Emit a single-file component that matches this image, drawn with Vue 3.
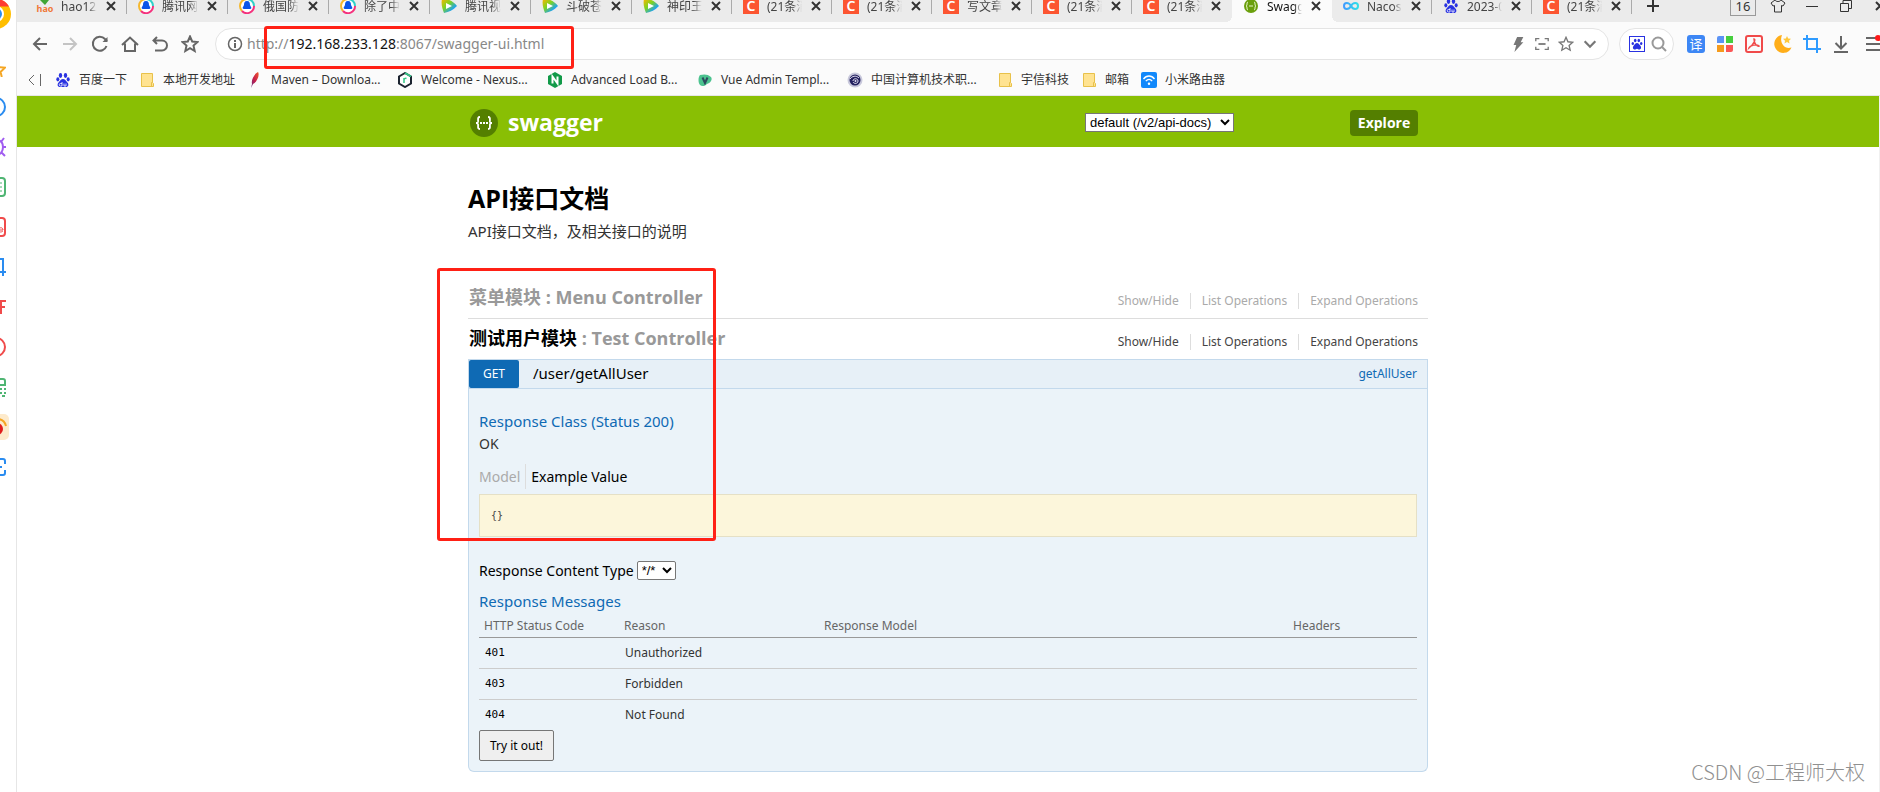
<script setup>
import { ref } from 'vue'

const tabs = [
  { icon: 'hao', title: 'hao123' },
  { icon: 'qq', title: '腾讯网' },
  { icon: 'qq', title: '俄国防部' },
  { icon: 'qq', title: '除了中国' },
  { icon: 'video', title: '腾讯视频' },
  { icon: 'video', title: '斗破苍穹' },
  { icon: 'video', title: '神印王座' },
  { icon: 'csdn', title: '(21条消息)' },
  { icon: 'csdn', title: '(21条消息)' },
  { icon: 'csdn', title: '写文章-CSDN' },
  { icon: 'csdn', title: '(21条消息)' },
  { icon: 'csdn', title: '(21条消息)' },
  { icon: 'swagger', title: 'Swagger UI', active: true },
  { icon: 'nacos', title: 'Nacos' },
  { icon: 'paw', title: '2023-07' },
  { icon: 'csdn', title: '(21条消息)' },
]

const navButtons = [
  { icon: 'back', label: '后退' },
  { icon: 'forward', label: '前进' },
  { icon: 'reload', label: '刷新' },
  { icon: 'home', label: '主页' },
  { icon: 'undo', label: '恢复' },
  { icon: 'star', label: '收藏' },
]

const addressButtons = [
  { icon: 'bolt', label: '极速模式' },
  { icon: 'scan', label: '截取' },
  { icon: 'star', label: '收藏本页' },
  { icon: 'chevron', label: '展开' },
]

const extensions = [
  { icon: 'grid', label: '应用' },
  { icon: 'pdf', label: 'PDF' },
  { icon: 'moon', label: '夜间模式' },
  { icon: 'crop', label: '截图' },
  { icon: 'download', label: '下载' },
]

const bookmarks = [
  { icon: 'paw', title: '百度一下' },
  { icon: 'folder', title: '本地开发地址' },
  { icon: 'feather', title: 'Maven – Downloa...', long: true },
  { icon: 'nexus', title: 'Welcome - Nexus...', long: true },
  { icon: 'nginx', title: 'Advanced Load B...', long: true },
  { icon: 'vue', title: 'Vue Admin Templ...', long: true },
  { icon: 'seal', title: '中国计算机技术职...', long: true },
  { icon: 'folder', title: '宇信科技' },
  { icon: 'folder', title: '邮箱' },
  { icon: 'wifi', title: '小米路由器' },
]

const rail = [
  { icon: 'r-star', label: '收藏夹' },
  { icon: 'r-blue', label: '历史' },
  { icon: 'r-bug', label: '工具' },
  { icon: 'r-note', label: '笔记' },
  { icon: 'r-card', label: '文档' },
  { icon: 'r-crop', label: '截图' },
  { icon: 'r-font', label: '字体' },
  { icon: 'r-red', label: '录制' },
  { icon: 'r-qr', label: '二维码' },
  { icon: 'r-weibo', label: '微博' },
  { icon: 'r-scan', label: '扫描' },
]

const resources = [
  { name: '菜单模块', controller: 'Menu Controller', active: false },
  { name: '测试用户模块', controller: 'Test Controller', active: true },
]
const operations = ['Show/Hide', 'List Operations', 'Expand Operations']

const messages = [
  { code: '401', reason: 'Unauthorized' },
  { code: '403', reason: 'Forbidden' },
  { code: '404', reason: 'Not Found' },
]

const spec = ref('default')
const contentType = ref('*/*')
</script>

<template>
  <div class="browser">
    <svg class="sprite" aria-hidden="true">
      <defs>
        <linearGradient id="g-video" x1="0" y1="0" x2="1" y2="1">
          <stop offset="0" stop-color="#ffb400" /><stop offset=".4" stop-color="#7ed321" /><stop offset=".75" stop-color="#18a0fb" />
        </linearGradient>
        <linearGradient id="g-nacos" x1="0" x2="1"><stop offset="0" stop-color="#3f9bff" /><stop offset="1" stop-color="#2fe0e8" /></linearGradient>
        <linearGradient id="g-feather" x1="1" y1="0" x2="0" y2="1"><stop offset="0" stop-color="#f0582c" /><stop offset=".5" stop-color="#c8204a" /><stop offset="1" stop-color="#5b2c82" /></linearGradient>
      </defs>

      <symbol id="qq" viewBox="0 0 16 16">
        <circle cx="8" cy="8" r="7" fill="#fff" />
        <path d="M8 1a7 7 0 0 0-7 7c0 2 .8 3.800 2 5" fill="none" stroke="#f5b82e" stroke-width="2" />
        <path d="M8 1a7 7 0 0 1 7 7" fill="none" stroke="#2ed1c8" stroke-width="2" />
        <path d="M15 8a7 7 0 0 1-12 5" fill="none" stroke="#f5307c" stroke-width="2" />
        <path d="M8 3c2.500 0 3 2 3 4l1.500 3-1 1h-7l-1-1L5 7c0-2 .5-4 3-4z" fill="#0b55e8" />
      </symbol>
      <symbol id="video" viewBox="0 0 16 16">
        <path d="M1 1c5-1 11 2 15 7-4 4-8 6-13 7C1 10 0 6 1 1z" fill="url(#g-video)" />
        <path d="M5 5l6 3-6 3z" fill="#fff" />
      </symbol>
      <symbol id="swagger" viewBox="0 0 16 16">
        <circle cx="8" cy="8" r="7" fill="#6a9f0c" />
        <path d="M5 4c-2 0 0 4-2 4 2 0 0 4 2 4M11 4c2 0 0 4 2 4-2 0 0 4-2 4M6 8h4" fill="none" stroke="#e7f5c8" stroke-width="1" />
      </symbol>
      <symbol id="nacos" viewBox="0 0 16 16">
        <path d="M8 8C6 4 1 4 1 8s5 4 7 0 7-4 7 0-5 4-7 0z" fill="none" stroke="url(#g-nacos)" stroke-width="2" />
      </symbol>
      <symbol id="paw" viewBox="0 0 16 16">
        <g fill="#2932e1">
          <ellipse cx="5.500" cy="3.500" rx="1.700" ry="2.400" /><ellipse cx="10.500" cy="3.500" rx="1.700" ry="2.400" />
          <ellipse cx="2.800" cy="7.300" rx="1.500" ry="2.100" /><ellipse cx="13.200" cy="7.300" rx="1.500" ry="2.100" />
          <path d="M8 7c2 0 2.700 1.800 4.200 3.200 2 2 1.300 4.800-1.200 4.800H5c-2.500 0-3.200-2.800-1.200-4.800C5.300 8.800 6 7 8 7z" />
        </g>
        <path d="M7 10v4H5.500a1 1 0 0 1 0-2.500H7M9 11.500v2.500h2v-2.500" fill="none" stroke="#fff" stroke-width=".8" />
      </symbol>

      <symbol id="back" viewBox="0 0 18 18"><path d="M16 9H3M9 3L3 9l6 6" /></symbol>
      <symbol id="forward" viewBox="0 0 18 18"><path d="M2 9h13M9 3l6 6-6 6" /></symbol>
      <symbol id="reload" viewBox="0 0 18 18"><path d="M15.500 11a7 7 0 1 1-1.500-7l2 2" /><path d="M16.500 2v5h-5z" fill="currentColor" stroke="none" /></symbol>
      <symbol id="home" viewBox="0 0 18 18"><path d="M1 10l8-7.500L17 10M4 8.500V16h10V8.500" /></symbol>
      <symbol id="undo" viewBox="0 0 18 18"><path d="M6 2L2.500 5.500 6 9M3 5.500h8a5 5 0 0 1 0 10H4" /></symbol>
      <symbol id="star" viewBox="0 0 18 18"><path d="M9 1.500l2.200 5 5.300.5-4 3.600 1.200 5.400L9 13.200 4.300 16l1.200-5.400-4-3.600 5.300-.5z" /></symbol>
      <symbol id="info" viewBox="0 0 16 16"><circle cx="8" cy="8" r="6.500" stroke-width="1.500" /><path d="M8 7v5M8 4v2" stroke-width="2" /></symbol>
      <symbol id="bolt" viewBox="0 0 18 18"><path d="M8 1h7l-3 6h3L5 18l2-8H4z" fill="currentColor" stroke="none" /></symbol>
      <symbol id="scan" viewBox="0 0 18 18"><path d="M2 6V3h4M12 3h4v3M16 12v3h-4M6 15H2v-3" stroke-width="1.500" /><path d="M5 9h8" stroke-width="2" /></symbol>
      <symbol id="chevron" viewBox="0 0 18 18"><path d="M3 6l6 6 6-6" stroke-width="2.500" /></symbol>
      <symbol id="search" viewBox="0 0 18 18"><circle cx="8" cy="8" r="5.500" /><path d="M12 12l4 4" /></symbol>
      <symbol id="pawbox" viewBox="0 0 16 16">
        <rect x=".5" y=".5" width="15" height="15" fill="#fff" stroke="#2932e1" stroke-width="1" />
        <g fill="#2932e1" stroke="none">
          <ellipse cx="6.200" cy="4.500" rx="1.300" ry="1.700" /><ellipse cx="9.800" cy="4.500" rx="1.300" ry="1.700" />
          <ellipse cx="3.800" cy="7.500" rx="1.200" ry="1.500" /><ellipse cx="12.200" cy="7.500" rx="1.200" ry="1.500" />
          <path d="M8 7c1.500 0 2 1.200 3.200 2.500 1.500 1.600 1 4-1 4-1 0-1.200-.8-2.200-.8s-1.200.8-2.200.8c-2 0-2.500-2.400-1-4C6 8.200 6.500 7 8 7z" />
        </g>
      </symbol>
      <symbol id="grid" viewBox="0 0 18 18">
        <g stroke="none">
          <path d="M1 3a2 2 0 0 1 2-2h5v7H1z" fill="#5b93f5" /><path d="M10 1h7v7h-7z" fill="#46cf3e" />
          <path d="M1 10h7v7H1z" fill="#f59b1c" /><path d="M10 10h7v5a2 2 0 0 1-2 2h-5z" fill="#fb5656" />
        </g>
      </symbol>
      <symbol id="pdf" viewBox="0 0 18 18">
        <rect x="1" y="1" width="16" height="16" rx="2" stroke="#f04a4a" />
        <path d="M9 4c2 0 0 5-5 9 1-3 8-4 10-2-2 1-5-3-5-7z" stroke="#f04a4a" stroke-width="1.500" />
      </symbol>
      <symbol id="moon" viewBox="0 0 18 18">
        <path d="M8 0a9 9 0 1 0 9.500 12.500C10 15 5 7 8 0z" fill="#ffae1a" stroke="none" />
        <path d="M13 1l1.200 2.600 2.800.2-2 2 .5 2.700-2.500-1.400-2.500 1.400.5-2.700-2-2 2.800-.2z" fill="#ffc83d" stroke="none" />
      </symbol>
      <symbol id="crop" viewBox="0 0 18 18"><path d="M4 0v14h14M0 4h14v14" stroke="#2f9bff" /></symbol>
      <symbol id="download" viewBox="0 0 18 18"><path d="M9 1v12M3.500 8L9 13.500 14.500 8M2 17h14" /></symbol>
      <symbol id="menu" viewBox="0 0 18 18"><path d="M0 3h18M0 9h18M0 15h18" /><circle cx="12" cy="3" r="3" fill="#ff1a1a" stroke="none" /></symbol>

      <symbol id="folder" viewBox="0 0 16 16"><path d="M2.500 1.500h11v9l1 1v3h-12z" fill="#ffe391" stroke="#e8c14a" /><path d="M13.500 10.500h-1v4" fill="none" stroke="#e8c14a" /></symbol>
      <symbol id="feather" viewBox="0 0 16 16"><path d="M11 0c2 3-1 10-5 12l-2 4 1-4C4 8 7 2 11 0z" fill="url(#g-feather)" /></symbol>
      <symbol id="nexus" viewBox="0 0 16 16">
        <path d="M8 1L2 4.500v7L8 15l6-3.500v-7z" fill="#fff" stroke="#1c2430" stroke-width="2" /><path d="M8 1l6 3.500" stroke="#35c788" stroke-width="2" />
        <path d="M7 11V6M7 8c0-1 1-2 2.500-1.500" fill="none" stroke="#35c788" stroke-width="1.500" />
      </symbol>
      <symbol id="nginx" viewBox="0 0 16 16">
        <path d="M8 0l7 4v8l-7 4-7-4V4z" fill="#119a49" /><path d="M5.500 11.500v-7l5 7v-7" fill="none" stroke="#fff" stroke-width="2" />
      </symbol>
      <symbol id="vue" viewBox="0 0 16 16">
        <path d="M3 3c4-1 8-1 11 2 2 3-1 6-4 7-2 2-5 3-7 1C1 11 1 5 3 3z" fill="#4cc38f" /><path d="M5.500 5.500L8 11l2.500-5.500" fill="none" stroke="#2d4a5e" stroke-width="2" />
      </symbol>
      <symbol id="seal" viewBox="0 0 16 16">
        <circle cx="8" cy="8" r="7.500" fill="#c9c9dc" /><circle cx="8" cy="8" r="5.500" fill="#23205e" />
        <path d="M3 7c2-3 6-4 9-1M6 9c0-3 5-3 5 0s-4 3-5 1" fill="none" stroke="#e5e3f5" stroke-width="1" /><circle cx="8.500" cy="9" r="1" fill="#e5e3f5" />
      </symbol>
      <symbol id="wifi" viewBox="0 0 16 16">
        <rect width="16" height="16" rx="2" fill="#1289fb" /><path d="M2.500 7c3-4 8-4 11 0M4.800 9.200c2-2.400 4.500-2.400 6.400 0" fill="none" stroke="#fff" stroke-width="1.300" /><circle cx="8" cy="11.800" r="1.200" fill="#fff" />
      </symbol>

      <symbol id="close" viewBox="0 0 12 12"><path d="M2 2l8 8M10 2l-8 8" /></symbol>
      <symbol id="plus" viewBox="0 0 12 12"><path d="M6 0v12M0 6h12" stroke-width="2" /></symbol>
      <symbol id="shirt" viewBox="0 0 16 14"><path d="M5 1c1 2 5 2 6 0l4 3-2 3-1.500-.5V13h-7V6.500L3 7 1 4z" stroke-width="1" /></symbol>
      <symbol id="minimize" viewBox="0 0 12 12"><path d="M0 6.500h12" stroke-width="1" /></symbol>
      <symbol id="restore" viewBox="0 0 12 12"><path d="M.5 3.500h8v8h-8zM3 3.500v-3h8.500v8H8.500" stroke-width="1" /></symbol>

      <symbol id="r-star" viewBox="0 0 20 20"><path d="M10 5l2.500 5 6.500.6-4.500 4.400 1.300 5M10 17l-5.800 3 1.300-6L1 10.600 7.500 10z" stroke="#f5a623" /></symbol>
      <symbol id="r-blue" viewBox="0 0 20 20"><circle cx="10" cy="10" r="9" stroke="#2a8cf0" /></symbol>
      <symbol id="r-bug" viewBox="0 0 20 20"><path d="M10 3c5 0 7 3 7 7s-2 8-7 8M15 5l3-4M17 10h3M15 15l4 4" stroke="#a05cf0" /></symbol>
      <symbol id="r-note" viewBox="0 0 20 20"><rect x="2" y="1" width="17" height="18" rx="3" stroke="#4fb573" /><path d="M9 6h7M9 10h7M9 14h7" stroke="#4fb573" stroke-width="1" /></symbol>
      <symbol id="r-card" viewBox="0 0 20 20"><rect x="2" y="1" width="17" height="18" rx="3" stroke="#f04b4b" /><path d="M12 13h5c0-3-4-3-4 0s3 2 4 1" stroke="#f04b4b" stroke-width="1" /></symbol>
      <symbol id="r-crop" viewBox="0 0 20 20"><path d="M17 1v18M13 2h4M10 15h10" stroke="#2a8cf0" /></symbol>
      <symbol id="r-font" viewBox="0 0 20 20"><path d="M2 4h18M15 4v13M15 10h4" stroke="#f04b4b" /></symbol>
      <symbol id="r-red" viewBox="0 0 20 20"><circle cx="10" cy="10" r="9" stroke="#f04b4b" /></symbol>
      <symbol id="r-qr" viewBox="0 0 20 20"><path d="M13 2h4q2 0 2 2v4h-6M14 12h2M18 12h2M14 16h2M18 16h2M16 19h3" stroke="#4fb573" /></symbol>
      <symbol id="r-weibo" viewBox="0 0 26 26"><rect width="26" height="26" rx="5" fill="#fdeacb" stroke="none" /><circle cx="14" cy="15" r="6" fill="#e11d1d" stroke="none" /><path d="M14 5c5 0 8 3 9 7" stroke="#f5a623" /></symbol>
      <symbol id="r-scan" viewBox="0 0 20 20"><path d="M13 2h4q2 0 2 2v3M13 18h4q2 0 2-2v-3M12 10h4" stroke="#2a8cf0" /></symbol>
    </svg>

    <nav class="rail" aria-label="侧边栏">
      <button class="rail-logo" type="button" aria-label="浏览器">
        <svg viewBox="0 0 30 30">
          <circle cx="15" cy="15" r="15" fill="#ffbe00" />
          <path d="M15 15L2 7.500A15 15 0 0 1 28 7.500H15z" fill="#ff3b30" />
          <circle cx="15" cy="15" r="8" fill="#fff" /><circle cx="15" cy="15" r="6" fill="#2a8cf0" />
        </svg>
      </button>
      <button v-for="item in rail" :key="item.icon" :class="['rail-item', item.icon]" type="button" :aria-label="item.label">
        <svg class="line"><use :href="'#' + item.icon" /></svg>
      </button>
    </nav>

    <div class="window">
      <header class="chrome">
        <div class="tab-strip">
          <div class="tabs">
            <div v-for="(tab, i) in tabs" :key="i" :class="['tab', { active: tab.active, 'before-active': tabs[i + 1]?.active }]">
              <span v-if="tab.icon === 'csdn'" class="favicon csdn">C</span>
              <span v-else-if="tab.icon === 'hao'" class="favicon hao">
                <svg viewBox="0 0 16 7"><path d="M2 1l3-1 2 2 5-5h4L8 7z" fill="#3fa535" /></svg>
                <span>hao</span>
              </span>
              <svg v-else class="favicon"><use :href="'#' + tab.icon" /></svg>
              <span class="tab-title">{{ tab.title }}</span>
              <button class="tab-close" type="button" aria-label="关闭标签页"><svg class="line"><use href="#close" /></svg></button>
            </div>
          </div>
          <div class="window-controls">
            <button class="new-tab" type="button" aria-label="新标签页"><svg class="line"><use href="#plus" /></svg></button>
            <button class="tab-count" type="button">16</button>
            <button class="skin" type="button" aria-label="皮肤"><svg class="line"><use href="#shirt" /></svg></button>
            <button class="win" type="button" aria-label="最小化"><svg class="line"><use href="#minimize" /></svg></button>
            <button class="win" type="button" aria-label="还原"><svg class="line"><use href="#restore" /></svg></button>
            <button class="win" type="button" aria-label="关闭"><svg class="line"><use href="#close" /></svg></button>
          </div>
        </div>

        <div class="toolbar">
          <div class="nav-buttons">
            <button v-for="b in navButtons" :key="b.icon" :class="['tool', b.icon]" type="button" :aria-label="b.label">
              <svg class="line"><use :href="'#' + b.icon" /></svg>
            </button>
          </div>
          <div class="address">
            <svg class="info line"><use href="#info" /></svg>
            <span class="url">http://<b>192.168.233.128</b>:8067/swagger-ui.html</span>
            <div class="address-actions">
              <button v-for="b in addressButtons" :key="b.icon" class="tool small" type="button" :aria-label="b.label">
                <svg class="line"><use :href="'#' + b.icon" /></svg>
              </button>
            </div>
            <div class="mark mark-url"></div>
          </div>
          <div class="search">
            <svg class="engine"><use href="#pawbox" /></svg>
            <button class="tool" type="button" aria-label="搜索"><svg class="line"><use href="#search" /></svg></button>
          </div>
          <div class="extensions">
            <button class="tool translate" type="button" aria-label="翻译">译</button>
            <button v-for="b in extensions" :key="b.icon" class="tool" type="button" :aria-label="b.label">
              <svg class="line"><use :href="'#' + b.icon" /></svg>
            </button>
          </div>
          <button class="tool menu" type="button" aria-label="菜单"><svg class="line"><use href="#menu" /></svg></button>
        </div>

        <div class="bookmarks">
          <button class="collapse" type="button" aria-label="收起书签栏">
            <svg viewBox="0 0 14 14"><path d="M6 2L1 7l5 5M12.500 1v12" /></svg>
          </button>
          <a v-for="(b, i) in bookmarks" :key="i" class="bookmark" href="#">
            <svg class="favicon"><use :href="'#' + b.icon" /></svg>
            <span :class="{ long: b.long }">{{ b.title }}</span>
          </a>
        </div>
      </header>

      <div class="page">
        <div class="swagger-bar">
          <div class="container bar-inner">
            <a class="brand" href="#">
              <svg viewBox="0 0 28 28">
                <circle cx="14" cy="14" r="14" fill="#547f00" />
                <path d="M10 8C7 8 8.500 11 8 13q-.3 1-2 1 1.700 0 2 1c.5 2-1 5 2 5M18 8c3 0 1.500 3 2 5q.3 1 2 1-1.700 0-2 1c-.5 2 1 5-2 5" fill="none" stroke="#fff" stroke-width="1.800" />
                <path d="M10 13h2v2h-2zM13 13h2v2h-2zM16 13h2v2h-2z" fill="#fff" />
              </svg>
              <span>swagger</span>
            </a>
            <form class="spec-form" @submit.prevent>
              <select v-model="spec" aria-label="API"><option value="default">default (/v2/api-docs)</option></select>
              <button class="explore" type="submit">Explore</button>
            </form>
          </div>
        </div>

        <main class="container main">
          <h1>API接口文档</h1>
          <p class="desc">API接口文档，及相关接口的说明</p>

          <div class="resources">
            <div class="mark mark-api"></div>
            <section v-for="r in resources" :key="r.name" :class="['resource', { active: r.active }]">
              <div class="resource-head">
                <h2><a href="#">{{ r.name }}</a> : {{ r.controller }}</h2>
                <ul class="ops">
                  <li v-for="op in operations" :key="op"><a href="#">{{ op }}</a></li>
                </ul>
              </div>
            </section>

            <article class="operation">
              <h3 class="op-head">
                <a class="method" href="#">GET</a>
                <a class="path" href="#">/user/getAllUser</a>
                <a class="nickname" href="#">getAllUser</a>
              </h3>
              <div class="op-body">
                <h4>Response Class (Status 200)</h4>
                <p class="status">OK</p>
                <div class="signature">
                  <a href="#">Model</a>
                  <a class="selected" href="#">Example Value</a>
                </div>
                <pre class="snippet"><code>{}</code></pre>
                <div class="content-type">
                  <label for="content-type">Response Content Type</label>
                  <select id="content-type" v-model="contentType"><option>*/*</option></select>
                </div>
                <h4>Response Messages</h4>
                <table>
                  <thead>
                    <tr><th class="c-code">HTTP Status Code</th><th class="c-reason">Reason</th><th>Response Model</th><th class="c-headers">Headers</th></tr>
                  </thead>
                  <tbody>
                    <tr v-for="m in messages" :key="m.code"><td class="code">{{ m.code }}</td><td>{{ m.reason }}</td><td></td><td></td></tr>
                  </tbody>
                </table>
                <button class="try" type="button">Try it out!</button>
              </div>
            </article>
          </div>
        </main>
        <div class="watermark">CSDN @工程师大权</div>
      </div>
    </div>
  </div>
</template>

<style>
body { background: #fff; overflow: hidden; }
</style>

<style scoped>
* { box-sizing: border-box; }
.browser {
  display: flex;
  min-height: 100vh;
  overflow: hidden;
  font-family: "Noto Sans", "Noto Sans CJK SC", sans-serif;
  color: #333;
}
.sprite { position: absolute; width: 0; height: 0; }
svg { display: block; flex: none; }
button { margin: 0; padding: 0; border: 0; background: none; color: inherit; font: inherit; }
a { color: inherit; text-decoration: none; }
h1, h2, h3, h4, p, ul, pre { margin: 0; padding: 0; }
ul { list-style: none; }
.line { width: 100%; height: 100%; fill: none; stroke: currentColor; stroke-width: 2; }

.rail {
  flex: none;
  display: flex;
  flex-direction: column;
  align-items: flex-end;
  gap: 20px;
  width: 17px;
  padding-right: 10px;
  border-right: 1px solid #e6e6e6;
  overflow: hidden;
}
.rail-logo { width: 30px; height: 30px; margin: -1px -5px 8px 0; }
.rail-item { flex: none; width: 20px; height: 20px; }
.r-weibo { width: 26px; height: 26px; margin: -3px -3px -3px 0; }

.window { flex: 1; min-width: 0; display: flex; flex-direction: column; }
.chrome { background: #fbfbfb; border-bottom: 1px solid #e6e6e6; }

.tab-strip { display: flex; height: 22px; background: #ebebeb; overflow: hidden; }
.tabs { flex: 1; min-width: 0; display: flex; padding-left: 9px; }
.tab {
  flex: 0 1 100px;
  min-width: 0;
  display: flex;
  align-items: center;
  gap: 8px;
  height: 32px;
  margin-top: -10px;
  padding: 0 10px 0 11px;
  position: relative;
  font-size: 12px;
  color: #444;
}
.tab:nth-child(-n+6) { flex-basis: 101px; }
.tab::after { content: ""; position: absolute; right: 0; top: 8px; bottom: 8px; width: 1px; background: #aaa; }
.tab.active { background: #fbfbfb; color: #111; }
.tab.active::after, .tab.before-active::after { display: none; }
.tab.before-active { background: radial-gradient(circle at 0 0, transparent 6px, #fbfbfb 6px) right bottom / 6px 6px no-repeat; }
.tab.active + .tab { background: radial-gradient(circle at 100% 0, transparent 6px, #fbfbfb 6px) left bottom / 6px 6px no-repeat; }
.favicon { flex: none; width: 16px; height: 16px; }
.csdn { background: #fc5531; color: #fff; font-size: 14px; font-weight: 600; line-height: 16px; text-align: center; }
.hao { display: flex; flex-direction: column; align-items: center; color: #f07838; font-size: 9px; font-weight: 700; line-height: 8px; }
.hao svg { width: 16px; height: 7px; }
.tab-title {
  flex: 1;
  min-width: 0;
  overflow: hidden;
  white-space: nowrap;
  mask-image: linear-gradient(90deg, #000 75%, transparent);
}
.tab-close { flex: none; width: 12px; height: 12px; color: #333; }
.window-controls { flex: none; display: flex; align-items: center; width: 248px; height: 32px; margin-top: -10px; color: #333; }
.new-tab { flex: none; width: 12px; height: 12px; margin: 0 71px 0 15px; }
.tab-count { flex: none; width: 26px; height: 20px; margin-right: 14px; border: 1px solid #999; font-size: 13px; line-height: 18px; }
.skin { flex: none; width: 16px; height: 14px; margin-right: 20px; }
.win { flex: none; width: 12px; height: 12px; margin-right: 22px; }

.toolbar { display: flex; align-items: center; height: 44px; padding-left: 14px; color: #666; }
.tool { flex: none; display: block; width: 18px; height: 18px; }
.tool.small { width: 16px; height: 16px; }
.small .line { stroke-width: 1.5; }
.nav-buttons { display: flex; gap: 12px; margin-right: 16px; }
.forward { color: #c4c4c4; }
.address {
  flex: 1;
  min-width: 0;
  position: relative;
  display: flex;
  align-items: center;
  height: 32px;
  padding: 0 10px 0 11px;
  border: 1px solid #e4e4e4;
  border-radius: 16px;
  background: #fff;
}
.info { width: 16px; height: 16px; margin-right: 4px; }
.url { flex: 1; white-space: nowrap; overflow: hidden; font-size: 14px; line-height: 20px; color: #888; }
.url b { font-weight: 400; color: #111; }
.address-actions { display: flex; gap: 8px; color: #777; }
.search { flex: none; display: flex; align-items: center; gap: 5px; height: 32px; margin: 0 13px 0 10px; padding: 0 5px 0 9px; border: 1px solid #e4e4e4; border-radius: 16px; background: #fff; color: #999; }
.engine { width: 16px; height: 16px; }
.extensions { flex: none; display: flex; gap: 11px; }
.translate { border-radius: 3px; background: #3d87f5; color: #fff; font-size: 13px; line-height: 18px; text-align: center; }
.menu { width: 14px; margin-left: 16px; overflow: hidden; }
.menu .line { width: 18px; }

.mark { position: absolute; border: 3px solid #ff2015; border-radius: 3px; pointer-events: none; z-index: 2; }
.mark-url { left: 48px; top: -3px; width: 310px; height: 43px; }
.mark-api { left: -31px; top: -10px; width: 279px; height: 273px; }

.bookmarks { display: flex; align-items: center; gap: 12px; height: 29px; padding: 0 0 2px 11px; font-size: 12px; line-height: 18px; overflow: hidden; }
.collapse { width: 14px; height: 14px; margin-right: 1px; }
.collapse svg { width: 14px; height: 14px; fill: none; stroke: #666; stroke-width: 1; }
.bookmark { flex: none; display: flex; align-items: center; gap: 8px; white-space: nowrap; }
.long { width: 114px; }

.page { flex: 1; position: relative; background: #fff; border-right: 1px solid #f0f0f0; }
.container { width: 100%; max-width: 960px; margin: 0 auto; }
.swagger-bar { background: #89bf04; }
.bar-inner { display: flex; align-items: center; justify-content: space-between; height: 51px; padding: 2px 10px 0 2px; }
.brand { display: flex; align-items: center; gap: 10px; color: #fff; font-family: "Open Sans", sans-serif; font-size: 23px; line-height: 26px; font-weight: 700; }
.brand svg { width: 28px; height: 28px; }
.brand span { padding-bottom: 2px; }
.spec-form { display: flex; align-items: center; gap: 116px; }
select { height: 19px; border: 1px solid #767676; border-radius: 0; background: #fff; color: #000; font-family: "Liberation Sans", Arial, sans-serif; font-size: 13px; }
.spec-form select { width: 149px; }
.explore { width: 68px; height: 26px; border-radius: 4px; background: #547f00; color: #fff; font-family: "Open Sans", sans-serif; font-size: 14px; line-height: 26px; font-weight: 700; }

.main { padding: 35px 0 20px; }
h1 { font-family: "Open Sans", "Noto Sans CJK SC", sans-serif; font-size: 25px; line-height: 32px; font-weight: 700; color: #000; }
.desc { margin-top: 7px; font-size: 15px; line-height: 20px; }
.resources { position: relative; margin-top: 37px; }
.resource-head { display: flex; justify-content: space-between; height: 40px; padding: 0 10px 0 1px; color: #999; }
.resource + .resource { border-top: 1px solid #ddd; }
h2 { font-family: "Open Sans", "Noto Sans CJK SC", sans-serif; font-size: 18px; line-height: 38px; font-weight: 700; color: #999; }
.active h2 a { color: #000; }
.ops { display: flex; margin-top: 15px; font-size: 12px; line-height: 16px; color: #aaa; }
.ops li { height: 16px; }
.ops li + li { margin-left: 11px; padding-left: 11px; border-left: 1px solid #ddd; }
.active .ops { color: #444; }

.op-head { display: flex; align-items: center; height: 30px; padding-right: 10px; border: 1px solid #c3d9ec; background: #e7f0f7; font-weight: 400; }
.method { width: 50px; height: 28px; border-radius: 2px; background: #0f6ab4; color: #fff; font-size: 12px; line-height: 28px; text-align: center; }
.path { flex: 1; margin-left: 14px; padding-bottom: 2px; color: #000; font-size: 15px; line-height: 20px; }
.nickname { color: #0f6ab4; font-size: 12px; line-height: 20px; }
.op-body { padding: 22px 10px 10px; border: 1px solid #c3d9ec; border-top: 0; border-radius: 0 0 6px 6px; background: #ebf3f9; }
h4 { color: #0f6ab4; font-size: 15px; line-height: 20px; font-weight: 400; }
.status { margin-top: 3px; font-size: 14px; line-height: 20px; }
.signature { display: flex; margin-top: 10px; font-size: 14px; line-height: 25px; color: #aaa; }
.selected { margin-left: 5px; padding-left: 5px; border-left: 1px solid #ddd; color: #000; }
.snippet { height: 43px; margin-top: 5px; padding: 0 11px; border: 1px solid #e5e0c6; background: #fcf6db; color: #444; font-size: 12px; line-height: 41px; }
code, .code { font-family: "DejaVu Sans Mono", "Liberation Mono", monospace; }
code { font-size: 10px; }
.content-type { display: flex; align-items: center; gap: 3px; height: 20px; margin: 23px 0 11px; color: #000; font-size: 14px; }
.content-type select { width: 39px; border-radius: 2px; }
table { width: 100%; margin-top: 3px; border-collapse: collapse; table-layout: fixed; font-size: 12px; }
th { height: 23px; padding: 0 0 0 5px; border-bottom: 1px solid #999; font-weight: 400; text-align: left; color: #666; }
td { height: 31px; padding: 0 0 0 6px; border-bottom: 1px solid #ccc; }
tr:last-child td { border-bottom: 0; }
.code { color: #000; font-size: 11px; }
.c-code { width: 140px; }
.c-reason { width: 200px; }
.c-headers { width: 129px; }
.try { display: block; width: 75px; height: 31px; border: 1px solid #767676; border-radius: 2px; background: #efefef; color: #000; font-size: 12px; }

.watermark { position: absolute; right: 14px; bottom: 8px; color: #909090; font-family: "Noto Sans CJK SC", sans-serif; font-size: 20px; line-height: 24px; font-weight: 300; }
</style>
